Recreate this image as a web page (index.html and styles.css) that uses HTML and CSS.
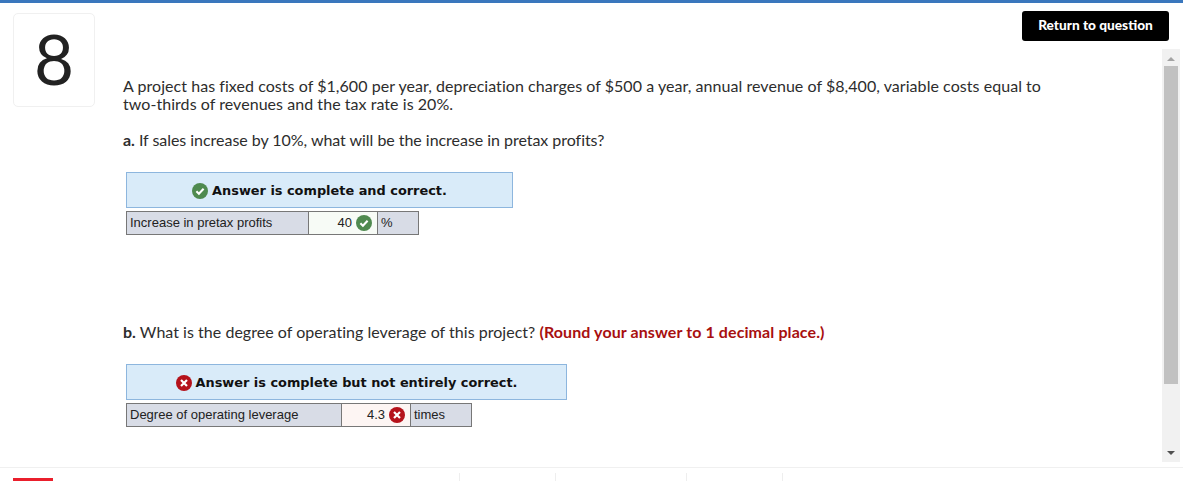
FILE: index.html
```html
<!DOCTYPE html>
<html lang="en">
<head>
    <meta charset="UTF-8">
    <title>Question 8 results</title>
    <link rel="stylesheet" href="styles.css">
</head>
<body>

    <div class="topbar"></div>

    <div class="workspace">
        <!-- Question number -->
        <div class="number-col">
            <div class="number-card">8</div>
        </div>

        <div class="main-col">
            <div class="actions">
                <button class="return-btn">Return to question</button>
            </div>

            <div class="scroll-area">
                <div class="question">
                    <p class="intro">A project has fixed costs of $1,600 per year, depreciation charges of $500 a year, annual revenue of $8,400, variable costs equal to two-thirds of revenues and the tax rate is 20%.</p>

                    <p class="part-a"><b>a.</b> If sales increase by 10%, what will be the increase in pretax profits?</p>

                    <div class="banner banner-a">
                        <svg class="icon" viewBox="0 0 16 16"><circle cx="8" cy="8" r="8" fill="#4f8a4f"/><path d="M4.4 8.3l2.5 2.4 4.7-5" fill="none" stroke="#fff" stroke-width="2.1"/></svg>
                        <span>Answer is complete and correct.</span>
                    </div>
                    <div class="answer-row">
                        <div class="cell label label-a">Increase in pretax profits</div>
                        <div class="cell value value-ok value-a">40
                            <svg class="icon" viewBox="0 0 16 16"><circle cx="8" cy="8" r="8" fill="#4f8a4f"/><path d="M4.4 8.3l2.5 2.4 4.7-5" fill="none" stroke="#fff" stroke-width="2.1"/></svg>
                        </div>
                        <div class="cell unit unit-a">%</div>
                    </div>

                    <p class="part-b"><b>b.</b> What is the degree of operating leverage of this project? <b class="hint">(Round your answer to 1 decimal place.)</b></p>

                    <div class="banner banner-b">
                        <svg class="icon" viewBox="0 0 16 16"><circle cx="8" cy="8" r="8" fill="#b5121b"/><path d="M5 5l6 6M11 5l-6 6" fill="none" stroke="#fff" stroke-width="2.2"/></svg>
                        <span>Answer is complete but not entirely correct.</span>
                    </div>
                    <div class="answer-row">
                        <div class="cell label label-b">Degree of operating leverage</div>
                        <div class="cell value value-bad value-b">4.3
                            <svg class="icon" viewBox="0 0 16 16"><circle cx="8" cy="8" r="8" fill="#b5121b"/><path d="M5 5l6 6M11 5l-6 6" fill="none" stroke="#fff" stroke-width="2.2"/></svg>
                        </div>
                        <div class="cell unit unit-b">times</div>
                    </div>
                </div>

                <!-- Scrollbar -->
                <div class="scrollbar">
                    <div class="arrow-up"></div>
                    <div class="thumb"></div>
                    <div class="arrow-down"></div>
                </div>
            </div>
        </div>
    </div>

    <div class="footer">
        <div class="logo-strip"></div>
        <div class="footer-tabs">
            <div class="tab tab-1"></div>
            <div class="tab tab-2"></div>
            <div class="tab tab-3"></div>
            <div class="tab tab-4"></div>
        </div>
    </div>

</body>
</html>
```

FILE: styles.css
```css
* {
    margin: 0;
    padding: 0;
    box-sizing: border-box;
}

html, body {
    height: 100%;
    overflow: hidden;
}

body {
    display: flex;
    flex-direction: column;
    font-family: 'Lato', sans-serif;
    font-size: 16px;
    font-variant-ligatures: none;
    color: #2d2d2d;
    background-color: white;
}

.topbar {
    height: 3px;
    background-color: #3a77bd;
}

.workspace {
    display: flex;
    height: 464px;
}

.number-col {
    width: 123px;
    padding: 10px 0 0 13px;
}

.number-card {
    display: flex;
    align-items: center;
    justify-content: center;
    width: 82px;
    height: 94px;
    padding-bottom: 4px;
    border: 1px solid #f0f0f0;
    border-radius: 5px;
    font-size: 69px;
    line-height: 1;
    color: #222;
}

.main-col {
    flex: 1;
    display: flex;
    flex-direction: column;
}

/* Button row */
.actions {
    display: flex;
    justify-content: flex-end;
    height: 46px;
    padding: 8px 14px 0 0;
}

.return-btn {
    width: 147px;
    height: 30px;
    padding-bottom: 3px;
    background-color: black;
    color: white;
    font-family: 'Lato', sans-serif;
    font-size: 13.7px;
    font-weight: 900;
    border: none;
    border-radius: 3px;
}

.scroll-area {
    flex: 1;
    display: flex;
    justify-content: space-between;
    padding-right: 3px;
}

.question {
    width: 925px;
    padding-top: 28px;
    line-height: 18px;
}

.intro {
    letter-spacing: 0.05px;
}

.part-a {
    margin-top: 18px;
    letter-spacing: -0.04px;
}

.part-b {
    padding-top: 88px;
    letter-spacing: 0.03px;
}

.part-a b, .part-b b {
    font-weight: 700;
}

.hint {
    color: #a80f0f;
    letter-spacing: 0.1px;
}

/* Result banner */
.banner {
    display: flex;
    align-items: center;
    justify-content: center;
    gap: 4px;
    height: 36px;
    margin: 23px 0 3px 3px;
    padding-top: 1px;
    background-color: #d9ebf9;
    border: 1px solid #8db6de;
    font-family: 'DejaVu Sans', sans-serif;
    font-size: 12.9px;
    font-weight: 700;
    color: #111;
}

.banner-a {
    width: 387px;
}

.banner-b {
    width: 441px;
}

.icon {
    width: 16px;
    height: 16px;
    flex-shrink: 0;
}

/* Answer table */
.answer-row {
    display: flex;
    height: 24px;
    margin-left: 3px;
    border: 1px solid #777;
    width: fit-content;
    font-family: 'Liberation Sans', sans-serif;
    font-size: 13px;
    color: #222;
}

.cell {
    display: flex;
    align-items: center;
}

.label, .unit {
    background-color: #d8dce6;
    padding-left: 3px;
}

.value {
    justify-content: flex-end;
    gap: 4px;
    padding-right: 5px;
    border-left: 1px solid #777;
    border-right: 1px solid #777;
}

.value-ok {
    background-color: #f7fbf6;
}

.value-bad {
    background-color: #fdf5f3;
}

.label-a {
    width: 181px;
}

.value-a {
    width: 70px;
}

.unit-a {
    width: 40px;
}

.label-b {
    width: 214px;
}

.value-b {
    width: 70px;
}

.unit-b {
    width: 60px;
}

/* Scrollbar */
.scrollbar {
    display: flex;
    flex-direction: column;
    align-items: center;
    width: 18px;
    height: 413px;
    background-color: #f1f1f1;
}

.arrow-up, .arrow-down {
    width: 0;
    height: 0;
    border-left: 4px solid transparent;
    border-right: 4px solid transparent;
}

.arrow-up {
    margin: 8px 0 5px;
    border-bottom: 4px solid #a3a3a3;
}

.arrow-down {
    margin-top: auto;
    margin-bottom: 7px;
    border-top: 4px solid #505050;
}

.thumb {
    width: 14px;
    height: 318px;
    background-color: #c1c1c1;
}

/* Footer */
.footer {
    flex: 1;
    display: flex;
    border-top: 1px solid #f0f0f0;
}

.logo-strip {
    width: 40px;
    height: 3px;
    margin: 10px 0 0 13px;
    background-color: #ea1f2c;
}

.footer-tabs {
    display: flex;
    height: 8px;
    margin: 5px 0 0 406px;
}

.tab {
    border-left: 1px solid #eee;
}

.tab-1 {
    width: 96px;
}

.tab-2 {
    width: 131px;
}

.tab-3 {
    width: 96px;
}
```
